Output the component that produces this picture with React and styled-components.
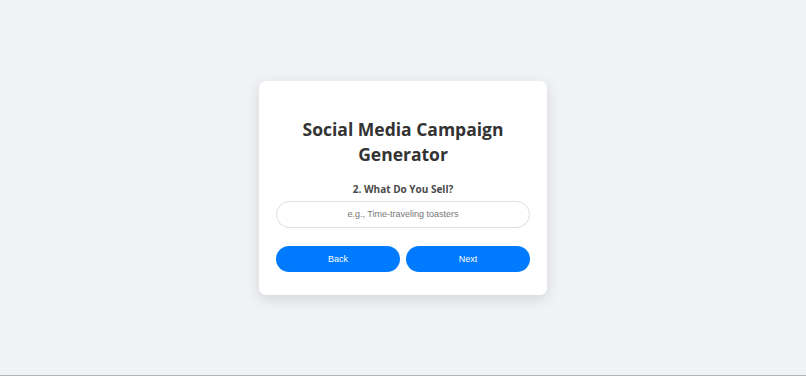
import React, { useState } from 'react';
import styled, { createGlobalStyle } from 'styled-components';

const GlobalStyle = createGlobalStyle`
  html, body {
    margin: 0;
    padding: 0;
    background: #f0f2f5;
  }
  * {
    box-sizing: border-box;
  }
`;

const Page = styled.div`
  min-height: 100vh;
  display: flex;
  align-items: center;
  justify-content: center;
  background: #f0f2f5;
  border-bottom: 1px solid #b4b4b8;
  font-family: "Open Sans", "Noto Sans", sans-serif;
`;

const Card = styled.div`
  width: 288px;
  background: #fff;
  border-radius: 7px;
  box-shadow: 0 4px 14px rgba(0, 0, 0, 0.12);
  padding: 17px 17px 23px;
  display: flex;
  flex-direction: column;
  align-items: stretch;
`;

const Title = styled.h1`
  margin: 19px 0 0;
  font-size: 17.5px;
  line-height: 25px;
  font-weight: 700;
  color: #333;
  text-align: center;
`;

const Label = styled.label`
  margin-top: 15px;
  font-size: 10px;
  line-height: 15px;
  font-weight: 700;
  color: #4a4a4a;
  text-align: center;
`;

const Input = styled.input`
  margin-top: 4px;
  height: 27px;
  width: 100%;
  border: 1px solid #ddd;
  border-radius: 14px;
  padding: 0 12px;
  font: 9px "Liberation Sans", Arial, sans-serif;
  color: #333;
  text-align: center;
  outline: none;

  &::placeholder {
    color: #777;
  }
`;

const Actions = styled.div`
  margin-top: 18px;
  display: flex;
  gap: 6px;
`;

const Button = styled.button`
  flex: 1;
  height: 26px;
  border: none;
  border-radius: 13px;
  background: #007bff;
  color: #fff;
  font: 9px "Liberation Sans", Arial, sans-serif;
  cursor: pointer;
`;

export default function App() {
  const [product, setProduct] = useState('');

  return (
    <>
      <GlobalStyle />
      <Page>
        <Card>
          <Title>Social Media Campaign Generator</Title>
          <Label htmlFor="product">2. What Do You Sell?</Label>
          <Input
            id="product"
            value={product}
            onChange={(e) => setProduct(e.target.value)}
            placeholder="e.g., Time-traveling toasters"
          />
          <Actions>
            <Button>Back</Button>
            <Button>Next</Button>
          </Actions>
        </Card>
      </Page>
    </>
  );
}
